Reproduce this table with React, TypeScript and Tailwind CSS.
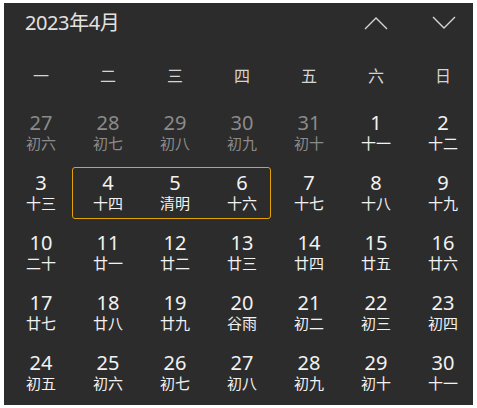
const weekdays = ["一", "二", "三", "四", "五", "六", "日"];

type Day = { d: number; lunar: string; muted?: boolean };

const days: Day[] = [
  { d: 27, lunar: "初六", muted: true },
  { d: 28, lunar: "初七", muted: true },
  { d: 29, lunar: "初八", muted: true },
  { d: 30, lunar: "初九", muted: true },
  { d: 31, lunar: "初十", muted: true },
  { d: 1, lunar: "十一" },
  { d: 2, lunar: "十二" },
  { d: 3, lunar: "十三" },
  { d: 4, lunar: "十四" },
  { d: 5, lunar: "清明" },
  { d: 6, lunar: "十六" },
  { d: 7, lunar: "十七" },
  { d: 8, lunar: "十八" },
  { d: 9, lunar: "十九" },
  { d: 10, lunar: "二十" },
  { d: 11, lunar: "廿一" },
  { d: 12, lunar: "廿二" },
  { d: 13, lunar: "廿三" },
  { d: 14, lunar: "廿四" },
  { d: 15, lunar: "廿五" },
  { d: 16, lunar: "廿六" },
  { d: 17, lunar: "廿七" },
  { d: 18, lunar: "廿八" },
  { d: 19, lunar: "廿九" },
  { d: 20, lunar: "谷雨" },
  { d: 21, lunar: "初二" },
  { d: 22, lunar: "初三" },
  { d: 23, lunar: "初四" },
  { d: 24, lunar: "初五" },
  { d: 25, lunar: "初六" },
  { d: 26, lunar: "初七" },
  { d: 27, lunar: "初八" },
  { d: 28, lunar: "初九" },
  { d: 29, lunar: "初十" },
  { d: 30, lunar: "十一" },
];

function Chevron({ up }: { up?: boolean }) {
  return (
    <svg width="24" height="14" viewBox="0 0 24 14" fill="none">
      <polyline
        points={up ? "1,13 12,2 23,13" : "1,1 12,12 23,1"}
        stroke="#d6d6d6"
        strokeWidth="1.4"
      />
    </svg>
  );
}

export default function App() {
  return (
    <div
      className="h-[408px] w-[477px] bg-white pl-[4px] pt-[3px]"
      style={{ fontFamily: '"Noto Sans", "Noto Sans CJK SC", sans-serif' }}
    >
      <div className="h-[402px] w-[469px] bg-[#2c2c2c]">
        {/* Header */}
        <div className="flex h-[40px] items-center justify-between pl-[21px] pr-[17px]">
          <span className="text-[20px] leading-[24px] tracking-[-0.4px] text-[#e2e2e2]">2023年4月</span>
          <div className="flex items-center gap-[44px]">
            <Chevron up />
            <Chevron />
          </div>
        </div>

        {/* Weekdays */}
        <div className="grid h-[60px] grid-cols-7 items-center pt-[6px]">
          {weekdays.map((w) => (
            <div key={w} className="pl-[7px] text-center text-[16px] text-[#d4d4d4]">
              {w}
            </div>
          ))}
        </div>

        {/* Dates */}
        <div className="grid grid-cols-7 grid-rows-[repeat(5,60px)]">
          <div className="col-span-3 col-start-2 row-start-2 mx-[1px] my-[4px] rounded-[3px] border border-[#e3a20a]" />
          {days.map((day, i) => (
            <div
              key={i}
              className={`flex flex-col items-center justify-center gap-[2px] pl-[7px] ${
                day.muted ? "text-[#8b8b8b]" : "text-[#f2f2f2]"
              }`}
              style={{ gridColumnStart: (i % 7) + 1, gridRowStart: Math.floor(i / 7) + 1 }}
            >
              <span className="text-[20px] leading-[18px]">{day.d}</span>
              <span className="text-[15px] leading-[18px]">{day.lunar}</span>
            </div>
          ))}
        </div>
      </div>
    </div>
  );
}
